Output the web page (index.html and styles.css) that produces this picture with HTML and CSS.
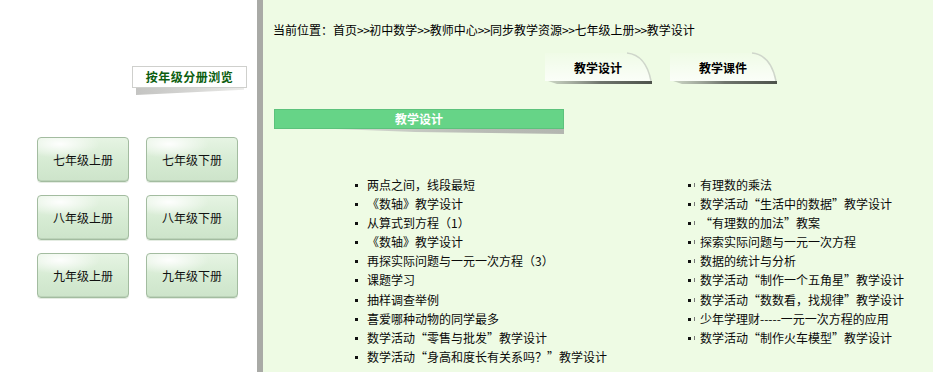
FILE: index.html
```html
<!DOCTYPE html>
<html lang="zh-CN">
<head>
<meta charset="utf-8">
<title>教学设计</title>
<link rel="stylesheet" href="styles.css">
</head>
<body>
<div class="page">
  <aside class="sidebar">
    <div class="browse-label">按年级分册浏览</div>
    <div class="grade-grid">
      <a class="grade-btn">七年级上册</a>
      <a class="grade-btn">七年级下册</a>
      <a class="grade-btn">八年级上册</a>
      <a class="grade-btn">八年级下册</a>
      <a class="grade-btn">九年级上册</a>
      <a class="grade-btn">九年级下册</a>
    </div>
  </aside>
  <div class="divider"></div>
  <main class="main">
    <div class="crumb">当前位置：首页<span class="gt">&gt;&gt;</span>初中数学<span class="gt">&gt;&gt;</span>教师中心<span class="gt">&gt;&gt;</span>同步教学资源<span class="gt">&gt;&gt;</span>七年级上册<span class="gt">&gt;&gt;</span>教学设计</div>
    <div class="tabs">
      <div class="tab">
        <svg class="tab-bg" width="110" height="36" viewBox="0 0 110 36">
          <defs>
            <linearGradient id="tg1" x1="0" y1="0" x2="0" y2="1">
              <stop offset="0" stop-color="#ffffff" stop-opacity="0.1"/>
              <stop offset="1" stop-color="#ffffff" stop-opacity="0.75"/>
            </linearGradient>
            <linearGradient id="ts1" x1="0" y1="0" x2="1" y2="0">
              <stop offset="0" stop-color="#8a8f88" stop-opacity="0.35"/>
              <stop offset="0.5" stop-color="#6f756d"/>
              <stop offset="1" stop-color="#4d534b"/>
            </linearGradient>
          </defs>
          <path d="M0,31 L0,3 L82,3 Q101,5 106,31 Z" fill="url(#tg1)"/>
          <path d="M82,3 Q101,5 106,31" fill="none" stroke="#cfd6cb" stroke-width="1.5"/>
          <path d="M3,31 L107,31 L107,34 L12,34 Z" fill="url(#ts1)"/>
        </svg>
        <span class="tab-text">教学设计</span>
      </div>
      <div class="tab">
        <svg class="tab-bg" width="110" height="36" viewBox="0 0 110 36">
          <path d="M0,31 L0,3 L82,3 Q101,5 106,31 Z" fill="url(#tg1)"/>
          <path d="M82,3 Q101,5 106,31" fill="none" stroke="#cfd6cb" stroke-width="1.5"/>
          <path d="M3,31 L107,31 L107,34 L12,34 Z" fill="url(#ts1)"/>
        </svg>
        <span class="tab-text">教学课件</span>
      </div>
    </div>
    <div class="section-bar">教学设计</div>
    <div class="lists">
      <ul class="list list-left">
        <li>两点之间，线段最短</li>
        <li>《数轴》教学设计</li>
        <li>从算式到方程（1）</li>
        <li>《数轴》教学设计</li>
        <li>再探实际问题与一元一次方程（3）</li>
        <li>课题学习</li>
        <li>抽样调查举例</li>
        <li>喜爱哪种动物的同学最多</li>
        <li>数学活动“零售与批发”教学设计</li>
        <li>数学活动“身高和度长有关系吗？”教学设计</li>
      </ul>
      <ul class="list list-right">
        <li>有理数的乘法</li>
        <li>数学活动“生活中的数据”教学设计</li>
        <li> “有理数的加法”教案</li>
        <li>探索实际问题与一元一次方程</li>
        <li>数据的统计与分析</li>
        <li>数学活动“制作一个五角星”教学设计</li>
        <li>数学活动“数数看，找规律”教学设计</li>
        <li>少年学理财-----一元一次方程的应用</li>
        <li>数学活动“制作火车模型”教学设计</li>
      </ul>
    </div>
  </main>
</div>
</body>
</html>
```

FILE: styles.css
```css
html, body {
  margin: 0;
  padding: 0;
}
body {
  font-family: "Noto Sans CJK SC", "Liberation Sans", sans-serif;
  font-size: 12px;
  color: #000;
  background: #eefbe4;
}
.page {
  display: flex;
  width: 933px;
  height: 372px;
  overflow: hidden;
}
.sidebar {
  width: 257px;
  flex: none;
  background: #ffffff;
  display: flex;
  flex-direction: column;
  padding-top: 66px;
  box-sizing: border-box;
}
.browse-label {
  position: relative;
  margin-left: 132px;
  width: 115px;
  height: 22px;
  box-sizing: border-box;
  border: 1px solid #cfd0cd;
  background: #fff;
  color: #0c5e10;
  font-weight: bold;
  font-size: 12px;
  line-height: 20px;
  text-align: center;
  letter-spacing: 0.5px;
}
.browse-label::after {
  content: "";
  position: absolute;
  left: 3px;
  top: 21px;
  width: 108px;
  height: 7px;
  background: linear-gradient(90deg, #c4c4c2 0%, #d4d4d2 50%, #ececea 100%);
  clip-path: polygon(0 0, 100% 0, 100% 25%, 0 100%);
}
.grade-grid {
  margin-top: 49px;
  margin-left: 37px;
  display: grid;
  grid-template-columns: 92px 92px;
  grid-auto-rows: 45px;
  column-gap: 17px;
  row-gap: 13px;
}
.grade-btn {
  display: flex;
  align-items: center;
  justify-content: center;
  box-sizing: border-box;
  border: 1px solid #a3bca0;
  border-radius: 4px;
  background:
    radial-gradient(ellipse 40px 14px at 22px 6px, rgba(255,255,255,0.95), rgba(255,255,255,0) 100%),
    linear-gradient(180deg, #e6f4e3 0%, #d6ebd3 55%, #cde4ca 100%);
  box-shadow: inset 0 -1px 0 #bcd3b9, 0 1px 0 #e4ece2;
  color: #111;
  font-size: 12px;
  cursor: pointer;
}
.divider {
  width: 6px;
  flex: none;
  background: #a9aaa6;
}
.main {
  flex: 1;
  display: flex;
  flex-direction: column;
  padding-left: 10px;
  padding-top: 22px;
  background: #eefbe4;
}
.crumb {
  line-height: 16px;
  height: 16px;
  white-space: nowrap;
}
.gt {
  letter-spacing: -0.5px;
}
.tabs {
  display: flex;
  gap: 15px;
  margin-top: 12px;
  margin-left: 272px;
  height: 36px;
}
.tab {
  position: relative;
  width: 110px;
  height: 36px;
}
.tab-bg {
  position: absolute;
  left: 0;
  top: 0;
}
.tab-text {
  position: absolute;
  left: 0;
  top: 10px;
  width: 106px;
  text-align: center;
  font-weight: bold;
  line-height: 16px;
  color: #000;
}
.section-bar {
  position: relative;
  margin-top: 23px;
  width: 290px;
  height: 20px;
  box-sizing: border-box;
  margin-left: 1px;
  background: #66d487;
  border: 1px solid #5cc27c;
  color: #fff;
  font-weight: bold;
  text-align: center;
  line-height: 17px;
}
.section-bar::after {
  content: "";
  position: absolute;
  left: 60px;
  top: 19px;
  width: 229px;
  height: 5px;
  background: linear-gradient(90deg, #d8dcd4 0%, #b9bcb6 60%, #b3b6b0 100%);
  clip-path: polygon(0 0, 100% 0, 100% 100%, 35% 60%);
}
.lists {
  display: flex;
  margin-top: 46px;
  margin-left: 82px;
}
.list {
  list-style: none;
  margin: 0;
  padding: 0;
}
.list li {
  position: relative;
  line-height: 19px;
  height: 19.1px;
  white-space: nowrap;
  padding-left: 12px;
  color: #0a0a0a;
}
.list li::before {
  content: "";
  position: absolute;
  left: 0;
  top: 9px;
  width: 3px;
  height: 3px;
  background: #111;
}
.list-left {
  width: 333px;
}
.list-right li::after {
  content: "";
  position: absolute;
  left: 6px;
  top: 8px;
  width: 1px;
  height: 4px;
  background: #777;
}
```
